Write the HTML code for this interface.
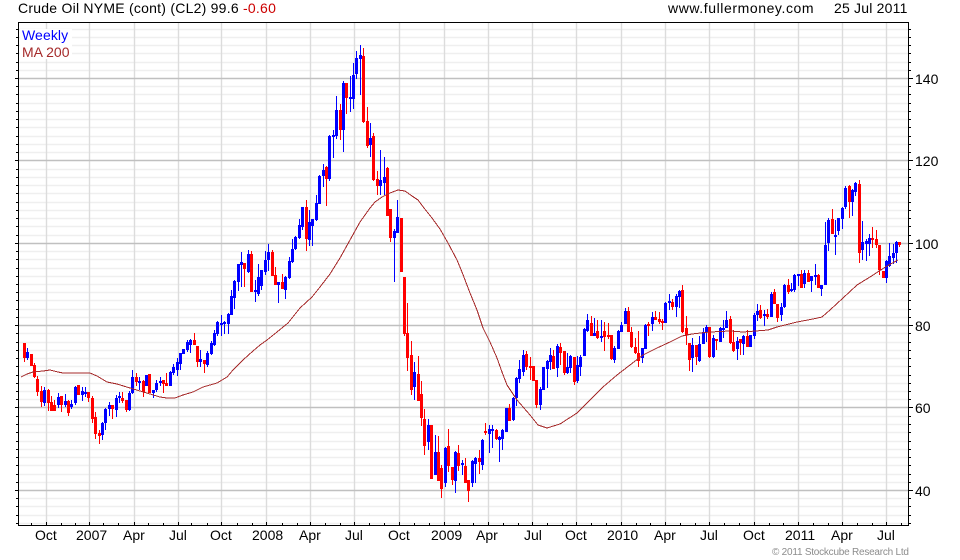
<!DOCTYPE html>
<html><head><meta charset="utf-8"><title>Crude Oil NYME (cont) (CL2)</title>
<style>html,body{margin:0;padding:0;background:#fff}svg{display:block}text{font-family:"Liberation Sans",sans-serif;font-size:14px;fill:#000}</style></head><body>
<svg width="960" height="560" viewBox="0 0 960 560" xmlns="http://www.w3.org/2000/svg">
<rect width="960" height="560" fill="#fff"/>
<g fill="none" stroke-width="1.4">
<path stroke="#efefef" d="M18 523.5H908M18 515.5H908M18 506.5H908M18 498.5H908M18 482.5H908M18 474.5H908M18 465.5H908M18 457.5H908M18 449.5H908M18 441.5H908M18 432.5H908M18 424.5H908M18 416.5H908M18 399.5H908M18 391.5H908M18 383.5H908M18 375.5H908M18 366.5H908M18 358.5H908M18 350.5H908M18 342.5H908M18 333.5H908M18 317.5H908M18 309.5H908M18 300.5H908M18 292.5H908M18 284.5H908M18 276.5H908M18 268.5H908M18 259.5H908M18 251.5H908M18 235.5H908M18 226.5H908M18 218.5H908M18 210.5H908M18 202.5H908M18 193.5H908M18 185.5H908M18 177.5H908M18 169.5H908M18 152.5H908M18 144.5H908M18 136.5H908M18 127.5H908M18 119.5H908M18 111.5H908M18 103.5H908M18 94.5H908M18 86.5H908M18 70.5H908M18 62.5H908M18 53.5H908M18 45.5H908M18 37.5H908M18 29.5H908"/>
<path stroke="#dcdcdc" d="M46.5 22V525M89.5 22V525M134.5 22V525M178.5 22V525M221.5 22V525M266.5 22V525M310.5 22V525M354.5 22V525M399.5 22V525M444.5 22V525M488.5 22V525M532.5 22V525M576.5 22V525M621.5 22V525M665.5 22V525M709.5 22V525M754.5 22V525M798.5 22V525M842.5 22V525M886.5 22V525"/>
<path stroke="#c0c0c0" d="M18 490.5H908M18 407.5H908M18 325.5H908M18 243.5H908M18 160.5H908M18 78.5H908"/>
</g>
<rect x="20" y="29" width="52" height="30" fill="#fff"/>
<g fill="none" shape-rendering="crispEdges">
<path stroke="#0000ff" stroke-width="1" d="M27.5 348V360M44.5 387V406M58.5 393V408M65.5 394V407M71.5 400V409M75.5 386V405M82.5 387V401M85.5 387V397M102.5 422V440M105.5 408V430M109.5 402V416M116.5 395V417M119.5 392V403M129.5 391V411M132.5 370V394M139.5 377V390M153.5 390V398M156.5 380V392M160.5 377V386M170.5 371V386M173.5 364V375M177.5 358V376M180.5 353V370M187.5 340V352M190.5 339V353M200.5 350V367M207.5 351V367M211.5 341V355M214.5 330V346M217.5 321V336M221.5 315V336M224.5 321V334M228.5 313V334M231.5 290V315M234.5 280V309M238.5 264V291M241.5 252V287M248.5 250V273M255.5 280V302M258.5 264V296M261.5 270V290M265.5 251V275M268.5 244V271M278.5 282V303M285.5 276V299M289.5 257V279M292.5 239V263M295.5 236V250M299.5 219V239M302.5 207V230M309.5 210V246M312.5 219V246M316.5 195V221M319.5 175V204M323.5 164V187M329.5 135V181M333.5 130V158M336.5 96V139M343.5 81V152M350.5 76V112M353.5 63V109M356.5 51V79M360.5 45V95M370.5 123V157M380.5 150V195M384.5 157V195M394.5 229V282M397.5 200V233M414.5 362V400M428.5 419V450M435.5 435V475M445.5 447V487M455.5 451V493M462.5 460V475M472.5 460V487M475.5 457V483M482.5 439V470M489.5 425V453M492.5 425V448M499.5 436V462M502.5 429V450M513.5 397V421M516.5 377V406M519.5 360V383M523.5 350V376M540.5 387V410M547.5 360V388M550.5 348V370M557.5 344V377M567.5 353V374M570.5 355V373M577.5 356V383M580.5 355V376M584.5 328V356M587.5 314V332M594.5 318V336M601.5 320V342M614.5 346V363M618.5 330V349M621.5 322V332M625.5 308V324M642.5 348V363M645.5 324V349M652.5 312V331M665.5 302V323M669.5 294V310M676.5 294V317M679.5 290V308M692.5 338V372M699.5 336V362M703.5 328V344M706.5 325V342M713.5 335V358M720.5 327V342M723.5 320V338M726.5 311V328M737.5 337V360M743.5 335V355M754.5 313V339M757.5 304V321M764.5 310V326M771.5 292V317M781.5 303V321M784.5 284V308M791.5 283V292M794.5 274V292M798.5 274V286M804.5 270V288M811.5 276V292M815.5 264V285M821.5 285V296M825.5 222V285M828.5 218V251M835.5 220V255M838.5 218V235M842.5 207V229M845.5 186V209M852.5 189V216M855.5 182V196M862.5 221V260M866.5 239V261M869.5 234V256M886.5 260V283M889.5 243V267M893.5 244V264M896.5 241V263"/>
<path stroke="#0000ff" stroke-width="3" d="M27.5 352V358M44.5 390V403M58.5 397V405M65.5 401V405M71.5 404V407M75.5 387V403M82.5 391V395M85.5 392V394M102.5 423V435M105.5 409V423M109.5 405V409M116.5 398V410M119.5 396V398M129.5 393V410M132.5 377V393M139.5 381V383M146.5 375V386M153.5 390V393M156.5 383V390M160.5 381V383M170.5 372V386M173.5 367V373M177.5 362V370M180.5 353V364M183.5 349V354M187.5 342V350M190.5 340V345M200.5 359V362M207.5 353V365M211.5 343V354M214.5 333V345M217.5 322V334M221.5 323V325M224.5 322V324M228.5 314V324M231.5 296V315M234.5 281V298M238.5 264V282M241.5 262V265M248.5 254V272M255.5 290V292M258.5 277V294M261.5 270V286M265.5 260V272M268.5 252V260M278.5 282V285M285.5 277V290M289.5 261V278M292.5 249V262M295.5 237V249M299.5 225V238M302.5 207V227M309.5 222V240M312.5 219V226M316.5 203V220M319.5 176V204M323.5 170V176M329.5 136V179M333.5 135V137M336.5 110V136M343.5 83V130M350.5 97V99M353.5 75V99M356.5 58V74M360.5 55V59M370.5 138V145M380.5 180V186M384.5 177V183M394.5 231V238M397.5 217V233M414.5 372V387M428.5 425V442M435.5 452V475M445.5 448V483M455.5 452V481M462.5 463V465M472.5 461V483M475.5 458V464M482.5 440V465M489.5 429V434M492.5 429V431M499.5 437V440M502.5 430V439M506.5 408V432M513.5 398V420M516.5 378V398M519.5 369V379M523.5 355V372M540.5 389V405M543.5 367V390M547.5 361V369M550.5 355V362M557.5 346V368M567.5 367V373M570.5 356V368M577.5 365V381M580.5 357V367M584.5 329V356M587.5 320V331M594.5 333V336M601.5 336V338M614.5 348V360M618.5 331V349M621.5 325V332M625.5 311V324M642.5 348V358M645.5 325V349M652.5 317V324M665.5 303V323M669.5 301V303M676.5 296V307M679.5 291V297M692.5 345V358M699.5 344V361M703.5 332V344M706.5 327V332M713.5 338V357M720.5 328V342M723.5 328V330M726.5 320V328M737.5 341V349M743.5 336V344M750.5 335V347M754.5 315V336M757.5 311V315M764.5 314V316M771.5 294V317M781.5 307V315M784.5 285V307M791.5 289V291M794.5 275V290M798.5 274V276M804.5 273V284M811.5 276V281M815.5 275V277M821.5 285V289M825.5 245V285M828.5 220V243M835.5 235V237M838.5 218V231M842.5 208V219M845.5 188V207M852.5 190V202M855.5 183V192M862.5 242V250M866.5 241V244M869.5 238V244M886.5 261V278M889.5 256V266M893.5 253V258M896.5 242V253"/>
<path stroke="#ff0000" stroke-width="1" d="M24.5 343V362M34.5 363V378M37.5 376V396M41.5 386V407M48.5 389V411M51.5 396V411M54.5 400V411M61.5 396V412M68.5 400V416M88.5 392V402M92.5 396V423M95.5 412V439M99.5 430V444M112.5 405V419M122.5 392V403M126.5 400V412M136.5 373V386M143.5 380V397M163.5 380V393M166.5 373V386M194.5 333V345M197.5 346V367M204.5 360V373M244.5 263V287M251.5 251V292M272.5 250V276M275.5 267V285M282.5 274V289M306.5 200V251M326.5 166V206M340.5 104V140M346.5 83V114M363.5 48V123M367.5 107V148M373.5 133V181M377.5 171V195M387.5 167V216M390.5 209V242M404.5 277V336M407.5 303V371M411.5 341V395M418.5 356V401M421.5 381V426M424.5 409V455M438.5 436V481M441.5 465V498M448.5 429V472M452.5 467V485M458.5 445V471M465.5 458V483M468.5 480V502M479.5 450V474M485.5 423V435M496.5 429V440M509.5 404V421M526.5 351V370M530.5 357V380M536.5 380V408M553.5 350V369M560.5 343V365M564.5 351V375M574.5 357V385M591.5 316V336M597.5 320V339M604.5 322V351M608.5 323V339M611.5 335V360M628.5 307V332M631.5 327V348M635.5 338V354M638.5 331V367M648.5 322V336M655.5 311V320M659.5 312V324M662.5 319V330M672.5 299V310M682.5 285V333M686.5 316V345M689.5 343V371M696.5 345V365M709.5 327V358M716.5 339V350M730.5 316V344M733.5 330V352M740.5 339V355M747.5 330V347M760.5 305V319M767.5 309V319M774.5 289V304M777.5 304V322M788.5 279V294M801.5 270V288M808.5 270V282M818.5 274V288M832.5 209V234M849.5 185V218M859.5 180V263M872.5 227V248M876.5 230V248M879.5 245V275M899.5 242V247"/>
<path stroke="#ff0000" stroke-width="3" d="M24.5 343V358M31.5 354V366M34.5 365V377M37.5 379V392M41.5 391V402M48.5 390V403M51.5 402V411M54.5 405V411M61.5 396V405M68.5 401V413M78.5 385V395M88.5 392V398M92.5 398V419M95.5 417V434M99.5 433V436M112.5 405V409M122.5 398V401M126.5 400V410M136.5 377V382M143.5 381V392M149.5 374V393M163.5 380V384M166.5 383V386M194.5 340V345M197.5 346V362M204.5 360V364M244.5 263V269M251.5 254V292M272.5 252V276M275.5 275V285M282.5 282V289M306.5 207V239M326.5 167V179M340.5 110V130M346.5 83V98M363.5 56V122M367.5 121V146M373.5 136V180M377.5 179V186M387.5 168V216M390.5 209V238M401.5 218V272M404.5 277V334M407.5 333V358M411.5 355V390M418.5 374V401M421.5 394V418M424.5 419V446M431.5 425V479M438.5 452V481M441.5 468V489M448.5 446V466M452.5 467V480M458.5 453V466M465.5 466V483M468.5 480V491M479.5 458V462M485.5 431V433M496.5 430V439M509.5 408V421M526.5 354V367M530.5 366V368M533.5 366V381M536.5 380V405M553.5 356V369M560.5 347V353M564.5 351V373M574.5 357V382M591.5 323V336M597.5 331V338M604.5 331V337M608.5 335V337M611.5 335V359M628.5 311V332M631.5 332V347M635.5 347V353M638.5 353V361M648.5 324V326M655.5 317V320M659.5 319V322M662.5 321V323M672.5 302V307M682.5 290V332M686.5 328V335M689.5 343V360M696.5 345V357M709.5 327V357M716.5 339V341M730.5 319V343M733.5 342V351M740.5 339V343M747.5 336V347M760.5 310V318M767.5 314V317M774.5 292V304M777.5 304V318M788.5 285V292M801.5 274V288M808.5 273V282M818.5 275V288M832.5 219V234M849.5 186V202M859.5 184V253M872.5 238V240M876.5 239V245M879.5 245V270M883.5 271V278M899.5 242V245"/>
</g>
<polyline fill="none" stroke="#a52a2a" stroke-width="1" shape-rendering="crispEdges" points="21,377 27,374 33,372 43,371 50,370 58,372 63,373 90,373 97,376 107,382 117,384 130,388 140,391 150,394 160,397 167,398 175,398 183,395 193,392 203,387 217,383 227,377 233,370 243,360 253,351 260,345 267,340 277,332 288,323 300,308 312,297 320,287 330,274 340,258 350,240 360,222 370,208 375,202 382,197 390,193 398,190 405,191 412,196 418,200 424,208 432,218 440,229 448,243 457,260 462,272 470,293 477,310 483,328 490,342 497,358 502,372 507,385 517,400 530,415 538,425 547,428 560,424 577,413 587,403 603,387 617,375 630,365 643,355 657,348 670,342 682,336 692,334 710,332 730,331 743,332 768,330 777,327 797,322 813,319 822,317 830,310 843,298 857,285 870,277 887,266 898,260"/>
<g fill="none" shape-rendering="crispEdges">
<rect x="18.5" y="22.5" width="890" height="503" stroke="#000"/>
<path stroke="#000" d="M16 523.5H18M16 515.5H18M16 506.5H18M16 498.5H18M15 490.5H18M16 482.5H18M16 474.5H18M16 465.5H18M16 457.5H18M16 449.5H18M16 441.5H18M16 432.5H18M16 424.5H18M16 416.5H18M15 407.5H18M16 399.5H18M16 391.5H18M16 383.5H18M16 375.5H18M16 366.5H18M16 358.5H18M16 350.5H18M16 342.5H18M16 333.5H18M15 325.5H18M16 317.5H18M16 309.5H18M16 300.5H18M16 292.5H18M16 284.5H18M16 276.5H18M16 268.5H18M16 259.5H18M16 251.5H18M15 243.5H18M16 235.5H18M16 226.5H18M16 218.5H18M16 210.5H18M16 202.5H18M16 193.5H18M16 185.5H18M16 177.5H18M16 169.5H18M15 160.5H18M16 152.5H18M16 144.5H18M16 136.5H18M16 127.5H18M16 119.5H18M16 111.5H18M16 103.5H18M16 94.5H18M16 86.5H18M15 78.5H18M16 70.5H18M16 62.5H18M16 53.5H18M16 45.5H18M16 37.5H18M16 29.5H18"/>
<path stroke="#000" d="M909 523.5H911M909 515.5H911M909 506.5H911M909 498.5H911M909 490.5H913M909 482.5H911M909 474.5H911M909 465.5H911M909 457.5H911M909 449.5H911M909 441.5H911M909 432.5H911M909 424.5H911M909 416.5H911M909 407.5H913M909 399.5H911M909 391.5H911M909 383.5H911M909 375.5H911M909 366.5H911M909 358.5H911M909 350.5H911M909 342.5H911M909 333.5H911M909 325.5H913M909 317.5H911M909 309.5H911M909 300.5H911M909 292.5H911M909 284.5H911M909 276.5H911M909 268.5H911M909 259.5H911M909 251.5H911M909 243.5H913M909 235.5H911M909 226.5H911M909 218.5H911M909 210.5H911M909 202.5H911M909 193.5H911M909 185.5H911M909 177.5H911M909 169.5H911M909 160.5H913M909 152.5H911M909 144.5H911M909 136.5H911M909 127.5H911M909 119.5H911M909 111.5H911M909 103.5H911M909 94.5H911M909 86.5H911M909 78.5H913M909 70.5H911M909 62.5H911M909 53.5H911M909 45.5H911M909 37.5H911M909 29.5H911"/>
<path stroke="#000" d="M31.5 523V525M46.5 522V525M61.5 523V525M75.5 523V525M89.5 522V525M103.5 523V525M118.5 523V525M134.5 522V525M148.5 523V525M163.5 523V525M178.5 522V525M191.5 523V525M207.5 523V525M221.5 522V525M237.5 523V525M252.5 523V525M266.5 522V525M282.5 523V525M297.5 523V525M310.5 522V525M325.5 523V525M340.5 523V525M354.5 522V525M369.5 523V525M384.5 523V525M399.5 522V525M414.5 523V525M429.5 523V525M444.5 522V525M459.5 523V525M473.5 523V525M488.5 522V525M503.5 523V525M518.5 523V525M532.5 522V525M547.5 523V525M562.5 523V525M576.5 522V525M591.5 523V525M606.5 523V525M621.5 522V525M636.5 523V525M650.5 523V525M665.5 522V525M680.5 523V525M695.5 523V525M709.5 522V525M724.5 523V525M739.5 523V525M754.5 522V525M769.5 523V525M783.5 523V525M798.5 522V525M813.5 523V525M828.5 523V525M842.5 522V525M857.5 523V525M872.5 523V525M886.5 522V525M901.5 523V525"/>
</g>
<text x="18" y="13" xml:space="preserve" style="letter-spacing:.24px">Crude Oil NYME (cont) (CL2) 99.6 <tspan style="fill:#cc0000">-0.60</tspan></text>
<text x="668" y="13" style="letter-spacing:.58px">www.fullermoney.com</text>
<text x="834" y="13" style="letter-spacing:.2px">25 Jul 2011</text>
<text x="22" y="40" style="fill:#0000ff;letter-spacing:.1px">Weekly</text>
<text x="22" y="57" style="fill:#a52a2a">MA 200</text>
<text x="915" y="84">140</text>
<text x="915" y="166">120</text>
<text x="915" y="249">100</text>
<text x="915" y="331">80</text>
<text x="915" y="413">60</text>
<text x="915" y="496">40</text>
<text x="35" y="540">Oct</text>
<text x="76" y="540">2007</text>
<text x="123" y="540">Apr</text>
<text x="169" y="540">Jul</text>
<text x="210" y="540">Oct</text>
<text x="252" y="540">2008</text>
<text x="299" y="540">Apr</text>
<text x="345" y="540">Jul</text>
<text x="388" y="540">Oct</text>
<text x="431" y="540">2009</text>
<text x="476" y="540">Apr</text>
<text x="524" y="540">Jul</text>
<text x="565" y="540">Oct</text>
<text x="607" y="540">2010</text>
<text x="654" y="540">Apr</text>
<text x="700" y="540">Jul</text>
<text x="743" y="540">Oct</text>
<text x="785" y="540">2011</text>
<text x="831" y="540">Apr</text>
<text x="877" y="540">Jul</text>
<text x="772" y="555" style="font-size:10px;fill:#8c8c8c;letter-spacing:-.23px">© 2011 Stockcube Research Ltd</text>
</svg>
</body></html>
